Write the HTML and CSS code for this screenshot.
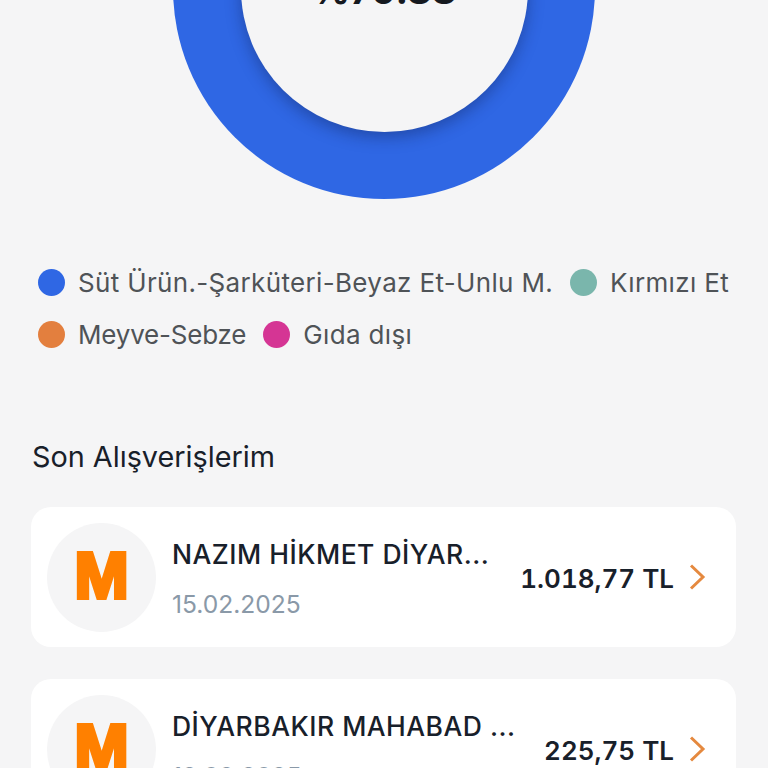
FILE: index.html
```html
<!DOCTYPE html>
<html lang="tr">

<head>
    <meta charset="UTF-8">
    <meta name="viewport" content="width=device-width, initial-scale=1.0">
    <title>Son Alışverişlerim</title>
    <link rel="stylesheet" href="styles.css">
</head>

<body>
    <div class="page">
        <div class="donut">
            <div class="donut_hole">
                <div class="donut_value">%79.88</div>
            </div>
        </div>

        <div class="legend">
            <div class="legend_item"><span class="dot dot_blue"></span>Süt Ürün.-Şarküteri-Beyaz Et-Unlu M.</div>
            <div class="legend_item"><span class="dot dot_teal"></span>Kırmızı Et</div>
            <div class="legend_item legend_tight"><span class="dot dot_orange"></span>Meyve-Sebze</div>
            <div class="legend_item"><span class="dot dot_pink"></span>Gıda dışı</div>
        </div>

        <h2 class="section_title">Son Alışverişlerim</h2>

        <div class="card">
            <div class="logo"><span class="logo_m">M</span></div>
            <div class="card_info">
                <div class="card_name">NAZIM HİKMET DİYAR...</div>
                <div class="card_date">15.02.2025</div>
            </div>
            <div class="card_price">1.018,77 TL</div>
            <svg class="chevron" width="18" height="26" viewBox="0 0 18 26">
                <path d="M3 1.5 L15 13 L3 24.5" fill="none" stroke="#e5893f" stroke-width="3" />
            </svg>
        </div>

        <div class="card">
            <div class="logo"><span class="logo_m">M</span></div>
            <div class="card_info">
                <div class="card_name">DİYARBAKIR MAHABAD ...</div>
                <div class="card_date">12.02.2025</div>
            </div>
            <div class="card_price">225,75 TL</div>
            <svg class="chevron" width="18" height="26" viewBox="0 0 18 26">
                <path d="M3 1.5 L15 13 L3 24.5" fill="none" stroke="#e5893f" stroke-width="3" />
            </svg>
        </div>
    </div>
</body>

</html>
```

FILE: styles.css
```css
html,
body {
    margin: 0;
    height: 768px;
    overflow: hidden;
    background-color: #f5f5f6;
}

body {
    font-family: "Inter", sans-serif;
}

.page {
    margin-top: -223px;
    padding: 0 32px;
}

.donut {
    width: 422px;
    height: 422px;
    margin: 0 auto;
    border-radius: 50%;
    background-color: #2f67e4;
    display: flex;
    align-items: center;
    justify-content: center;
}

.donut_hole {
    width: 287px;
    height: 287px;
    border-radius: 50%;
    background-color: #f5f5f6;
    box-shadow: 0 5px 16px rgba(15, 30, 80, 0.4);
    display: flex;
    align-items: center;
    justify-content: center;
}

.donut_value {
    padding-top: 4px;
    font-size: 38px;
    font-weight: 700;
    color: #15191f;
}

.legend {
    display: flex;
    flex-wrap: wrap;
    margin-top: 66px;
    padding-left: 6px;
    column-gap: 17px;
    row-gap: 18px;
}

.legend_item {
    display: flex;
    align-items: center;
    height: 34px;
    font-size: 26px;
    letter-spacing: 0.34px;
    color: #4f5357;
    white-space: nowrap;
}

.legend_tight {
    letter-spacing: -0.2px;
}

.dot {
    width: 27px;
    height: 27px;
    border-radius: 50%;
    margin-right: 13px;
}

.dot_blue {
    background-color: #2f67e4;
}

.dot_teal {
    background-color: #7ab6ac;
}

.dot_orange {
    background-color: #e37f3e;
}

.dot_pink {
    background-color: #d53594;
}

.section_title {
    margin: 86px 0 30px;
    font-size: 28.8px;
    line-height: 40px;
    font-weight: 400;
    color: #18202a;
}

.card {
    display: flex;
    align-items: center;
    height: 140px;
    margin: 0 0 32px -1px;
    padding: 0 30px 0 16px;
    border-radius: 20px;
    background-color: #ffffff;
}

.logo {
    flex: none;
    width: 109px;
    height: 109px;
    border-radius: 50%;
    background-color: #f5f5f6;
    display: flex;
    align-items: center;
    justify-content: center;
}

.logo_m {
    padding-bottom: 4px;
    font-family: "Liberation Sans", sans-serif;
    font-size: 65px;
    font-weight: 700;
    line-height: 1;
    color: #ff8000;
    -webkit-text-stroke: 4px #ff8000;
}

.card_info {
    flex: 1;
    min-width: 0;
    margin-left: 16px;
    padding-top: 3px;
}

.card_name {
    font-size: 26.5px;
    letter-spacing: 0.5px;
    font-weight: 500;
    color: #18202a;
    white-space: nowrap;
}

.card_date {
    margin-top: 19px;
    font-size: 24.6px;
    color: #8a99a8;
}

.card_price {
    flex: none;
    padding-top: 2px;
    font-size: 26px;
    font-variant-numeric: tabular-nums;
    font-weight: 600;
    color: #18202a;
    margin-right: 14px;
}

.chevron {
    flex: none;
}
```
